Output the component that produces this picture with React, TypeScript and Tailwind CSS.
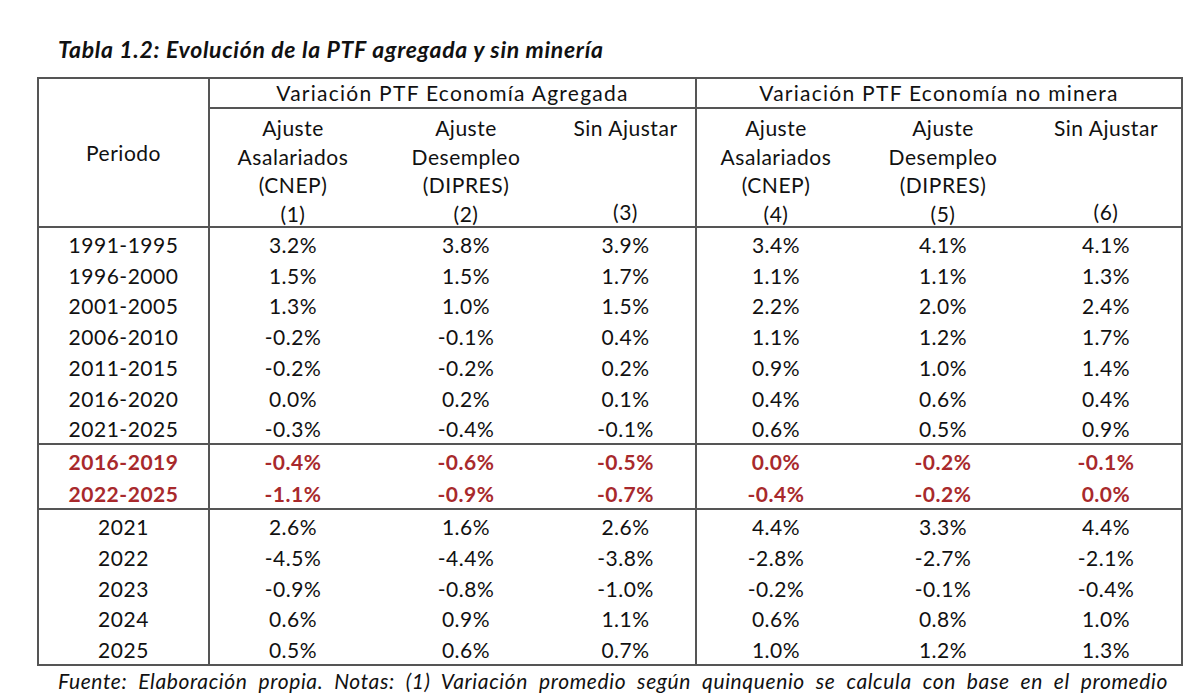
import React from "react";

const B = "border-[#555]";
const cols = [
  "w-[171px] border-r-2 border-[#555]",
  "w-[166px]",
  "w-[180px]",
  "w-[141px] border-r-2 border-[#555]",
  "w-[158px]",
  "w-[176px]",
  "flex-1",
];

const sec1 = [
  ["1991-1995", "3.2%", "3.8%", "3.9%", "3.4%", "4.1%", "4.1%"],
  ["1996-2000", "1.5%", "1.5%", "1.7%", "1.1%", "1.1%", "1.3%"],
  ["2001-2005", "1.3%", "1.0%", "1.5%", "2.2%", "2.0%", "2.4%"],
  ["2006-2010", "-0.2%", "-0.1%", "0.4%", "1.1%", "1.2%", "1.7%"],
  ["2011-2015", "-0.2%", "-0.2%", "0.2%", "0.9%", "1.0%", "1.4%"],
  ["2016-2020", "0.0%", "0.2%", "0.1%", "0.4%", "0.6%", "0.4%"],
  ["2021-2025", "-0.3%", "-0.4%", "-0.1%", "0.6%", "0.5%", "0.9%"],
];
const sec2 = [
  ["2016-2019", "-0.4%", "-0.6%", "-0.5%", "0.0%", "-0.2%", "-0.1%"],
  ["2022-2025", "-1.1%", "-0.9%", "-0.7%", "-0.4%", "-0.2%", "0.0%"],
];
const sec3 = [
  ["2021", "2.6%", "1.6%", "2.6%", "4.4%", "3.3%", "4.4%"],
  ["2022", "-4.5%", "-4.4%", "-3.8%", "-2.8%", "-2.7%", "-2.1%"],
  ["2023", "-0.9%", "-0.8%", "-1.0%", "-0.2%", "-0.1%", "-0.4%"],
  ["2024", "0.6%", "0.9%", "1.1%", "0.6%", "0.8%", "1.0%"],
  ["2025", "0.5%", "0.6%", "0.7%", "1.0%", "1.2%", "1.3%"],
];

function Row({ r, h, red }: { r: string[]; h: string; red?: boolean }) {
  return (
    <div className={`flex ${h}`}>
      {r.map((c, i) => (
        <div
          key={i}
          className={`${cols[i]} flex items-center justify-center pt-[3px] ${
            red ? "text-[#a8292c] font-bold" : ""
          }`}
        >
          {c}
        </div>
      ))}
    </div>
  );
}

function HeadCol({ lines, w }: { lines: string[]; w: string }) {
  return (
    <div className={`${w} flex flex-col items-center leading-[28.5px]`}>
      {lines.map((l, i) => (
        <div key={i} className="h-[28.5px] whitespace-nowrap">
          {l}
        </div>
      ))}
    </div>
  );
}

export default function App() {
  return (
    <div className="w-[1200px] h-[698px] overflow-hidden bg-white text-[#111] font-['Lato',sans-serif] text-[21px] tracking-[0.025em]">
      <div className="pt-[35px] pl-[58px] text-[23px] leading-[29px] font-bold italic tracking-[0.03em]">
        Tabla 1.2: Evolución de la PTF agregada y sin minería
      </div>
      <div className={`ml-[37px] mt-[13px] w-[1146px] border-2 ${B}`}>
        <div className={`flex border-b-2 ${B}`}>
          <div className={`${cols[0]} flex items-center justify-center`}>Periodo</div>
          <div className={`w-[487px] border-r-2 ${B}`}>
            <div className={`h-[30px] border-b-2 ${B} flex items-center justify-center tracking-[0.06em]`}>
              Variación PTF Economía Agregada
            </div>
            <div className="flex h-[117px] pt-[5px]">
              <HeadCol w="w-[166px]" lines={["Ajuste", "Asalariados", "(CNEP)", "(1)"]} />
              <HeadCol w="w-[180px]" lines={["Ajuste", "Desempleo", "(DIPRES)", "(2)"]} />
              <HeadCol w="flex-1" lines={["Sin Ajustar", "", "", "(3)"]} />
            </div>
          </div>
          <div className="flex-1">
            <div className={`h-[30px] border-b-2 ${B} flex items-center justify-center tracking-[0.06em]`}>
              Variación PTF Economía no minera
            </div>
            <div className="flex h-[117px] pt-[5px]">
              <HeadCol w="w-[158px]" lines={["Ajuste", "Asalariados", "(CNEP)", "(4)"]} />
              <HeadCol w="w-[176px]" lines={["Ajuste", "Desempleo", "(DIPRES)", "(5)"]} />
              <HeadCol w="flex-1" lines={["Sin Ajustar", "", "", "(6)"]} />
            </div>
          </div>
        </div>
        <div className={`border-b-2 ${B}`}>
          {sec1.map((r, i) => (
            <Row key={i} r={r} h="h-[30.7px]" />
          ))}
        </div>
        <div className={`border-b-2 ${B}`}>
          {sec2.map((r, i) => (
            <Row key={i} r={r} h="h-[31.5px]" red />
          ))}
        </div>
        <div>
          {sec3.map((r, i) => (
            <Row key={i} r={r} h="h-[30.8px]" />
          ))}
        </div>
      </div>
      <p className="ml-[58px] w-[1110px] text-justify [text-align-last:justify] italic text-[21px] leading-[30px] tracking-[0.03em] whitespace-nowrap">
        Fuente: Elaboración propia. Notas: (1) Variación promedio según quinquenio se calcula con base en el promedio
      </p>
    </div>
  );
}
